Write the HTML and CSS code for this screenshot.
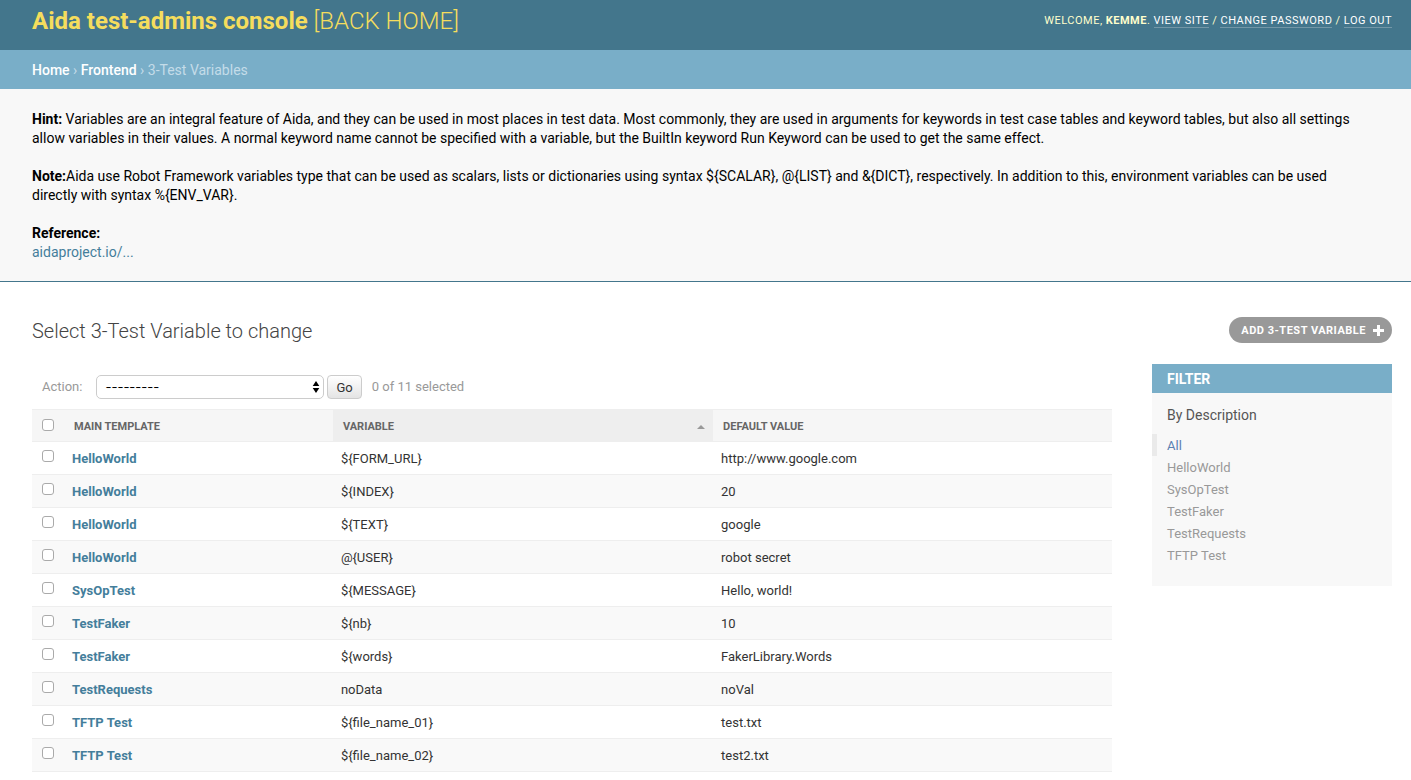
FILE: index.html
```html
<!DOCTYPE html>
<html lang="en">
<head>
<meta charset="utf-8">
<title>Select 3-Test Variable to change</title>
<link rel="stylesheet" href="styles.css">
</head>
<body>
<header class="header">
  <h1 class="brand"><strong>Aida test-admins console</strong> <a href="#">[BACK HOME]</a></h1>
  <div class="user-tools">Welcome, <strong>Kemme</strong>. <a href="#">View site</a> / <a href="#">Change password</a> / <a href="#">Log out</a></div>
</header>
<nav class="breadcrumbs"><a href="#">Home</a> › <a href="#">Frontend</a> › 3-Test Variables</nav>
<section class="hint">
  <p><strong>Hint:</strong> Variables are an integral feature of Aida, and they can be used in most places in test data. Most commonly, they are used in arguments for keywords in test case tables and keyword tables, but also all settings allow variables in their values. A normal keyword name cannot be specified with a variable, but the BuiltIn keyword Run Keyword can be used to get the same effect.</p>
  <p><strong>Note:</strong>Aida use Robot Framework variables type that can be used as scalars, lists or dictionaries using syntax ${SCALAR}, @{LIST} and &amp;{DICT}, respectively. In addition to this, environment variables can be used directly with syntax %{ENV_VAR}.</p>
  <p><strong>Reference:</strong><br><a href="#">aidaproject.io/...</a></p>
</section>
<main class="content">
  <div class="title-row">
    <h2>Select 3-Test Variable to change</h2>
    <a class="add" href="#">Add 3-Test Variable
      <svg width="11" height="13" viewBox="0 0 11 13" aria-hidden="true"><path d="M4 0h3v4h4v3h-4v4h-3v-4h-4v-3h4z" fill="#fff"/></svg>
    </a>
  </div>
  <div class="columns">
    <form class="changelist">
      <div class="actions">
        <label for="action">Action:</label>
        <span class="select-box">
          <select id="action"><option>---------</option></select>
          <svg class="arrows" width="8" height="12" viewBox="0 0 8 12" aria-hidden="true"><path d="M4 0l3.300 5H.7zM4 12L.7 7h6.600z" fill="#000"/></svg>
        </span>
        <button type="button">Go</button>
        <span class="counter">0 of 11 selected</span>
      </div>
      <table>
        <colgroup><col class="col-check"><col class="col-template"><col class="col-variable"><col></colgroup>
        <thead>
          <tr>
            <th><input type="checkbox" aria-label="Select all"></th>
            <th scope="col">Main Template</th>
            <th scope="col" class="sorted"><div class="sort">Variable <svg width="8" height="4" viewBox="0 0 8 4" aria-hidden="true"><path d="M4 0l4 4H0z" fill="#999"/></svg></div></th>
            <th scope="col">Default Value</th>
          </tr>
        </thead>
        <tbody>
          <tr><td><input type="checkbox" aria-label="Select ${FORM_URL}"></td><td><a href="#">HelloWorld</a></td><td>${FORM_URL}</td><td>http://www.google.com</td></tr>
          <tr><td><input type="checkbox" aria-label="Select ${INDEX}"></td><td><a href="#">HelloWorld</a></td><td>${INDEX}</td><td>20</td></tr>
          <tr><td><input type="checkbox" aria-label="Select ${TEXT}"></td><td><a href="#">HelloWorld</a></td><td>${TEXT}</td><td>google</td></tr>
          <tr><td><input type="checkbox" aria-label="Select @{USER}"></td><td><a href="#">HelloWorld</a></td><td>@{USER}</td><td>robot secret</td></tr>
          <tr><td><input type="checkbox" aria-label="Select ${MESSAGE}"></td><td><a href="#">SysOpTest</a></td><td>${MESSAGE}</td><td>Hello, world!</td></tr>
          <tr><td><input type="checkbox" aria-label="Select ${nb}"></td><td><a href="#">TestFaker</a></td><td>${nb}</td><td>10</td></tr>
          <tr><td><input type="checkbox" aria-label="Select ${words}"></td><td><a href="#">TestFaker</a></td><td>${words}</td><td>FakerLibrary.Words</td></tr>
          <tr><td><input type="checkbox" aria-label="Select noData"></td><td><a href="#">TestRequests</a></td><td>noData</td><td>noVal</td></tr>
          <tr><td><input type="checkbox" aria-label="Select ${file_name_01}"></td><td><a href="#">TFTP Test</a></td><td>${file_name_01}</td><td>test.txt</td></tr>
          <tr><td><input type="checkbox" aria-label="Select ${file_name_02}"></td><td><a href="#">TFTP Test</a></td><td>${file_name_02}</td><td>test2.txt</td></tr>
        </tbody>
      </table>
    </form>
    <aside class="filter">
      <h2>Filter</h2>
      <h3>By Description</h3>
      <ul>
        <li class="selected"><a href="#">All</a></li>
        <li><a href="#">HelloWorld</a></li>
        <li><a href="#">SysOpTest</a></li>
        <li><a href="#">TestFaker</a></li>
        <li><a href="#">TestRequests</a></li>
        <li><a href="#">TFTP Test</a></li>
      </ul>
    </aside>
  </div>
</main>
</body>
</html>
```
FILE: styles.css
```css
* { box-sizing: border-box; }
body {
  margin: 0;
  background: #fff;
  color: #333;
  font: 14px/19px Roboto, "Liberation Sans", sans-serif;
}
a { color: #447e9b; text-decoration: none; }
h1, h2, h3, p, ul { margin: 0; padding: 0; }

.header {
  display: flex;
  justify-content: space-between;
  align-items: flex-start;
  padding: 9px 19px 17px 32px;
  background: #43768c;
  color: #ffc;
}
.brand { font-size: 24px; line-height: 24px; font-weight: 300; color: #f5dd5d; }
.brand strong { font-weight: 700; }
.brand a { color: inherit; }
.user-tools {
  padding-top: 4px;
  font-size: 11px;
  line-height: 16px;
  letter-spacing: 0.5px;
  text-transform: uppercase;
}
.user-tools a { color: #fff; border-bottom: 1px solid #7397a7; }

.breadcrumbs {
  padding: 11px 19px 9px 32px;
  background: #79aec8;
  color: #c4dce8;
}
.breadcrumbs a { color: #fff; font-weight: 500; }

.hint {
  display: grid;
  gap: 19px;
  padding: 21px 40px 19px 32px;
  background: #f8f8f8;
  border-bottom: 1px solid #43768c;
  color: #000;
}

.content { padding: 35px 19px 8px 32px; }
.title-row {
  display: flex;
  justify-content: space-between;
  align-items: center;
  padding-bottom: 21px;
}
.title-row h2 { font-size: 20px; line-height: 24px; padding-top: 2px; font-weight: 300; color: #444; }
.add {
  display: flex;
  align-items: center;
  gap: 7px;
  padding: 6px 8px 4px 12px;
  border-radius: 15px;
  background: #999;
  color: #fff;
  font-size: 11px;
  line-height: 16px;
  font-weight: 700;
  letter-spacing: 0.5px;
  text-transform: uppercase;
}

.columns { display: flex; align-items: flex-start; gap: 40px; }
.changelist { flex: 1; min-width: 0; }
.actions {
  display: flex;
  align-items: center;
  padding: 11px 10px 10px;
  color: #999;
  font-size: 13px;
  line-height: 24px;
}
.select-box { position: relative; display: flex; margin: 0 3px 0 14px; }
.select-box select {
  width: 228px;
  height: 24px;
  padding: 0 8px;
  border: 1px solid #ccc;
  border-radius: 5px;
  background: #fff;
  color: #000;
  font: 13px Inter, "Liberation Sans", sans-serif;
  appearance: none;
}
.arrows { position: absolute; right: 4px; top: 6px; }
.actions button {
  height: 24px;
  padding: 0 8px;
  border: 1px solid #ccc;
  border-radius: 4px;
  background: linear-gradient(#fff, #e4e4e4);
  color: #333;
  font: 13px Roboto, "Liberation Sans", sans-serif;
}
.counter { margin-left: 10px; }

table { width: 100%; table-layout: fixed; border-collapse: separate; border-spacing: 0; }
.col-check { width: 32px; }
.col-template { width: 24.9%; }
.col-variable { width: 35.2%; }
th {
  padding: 9px 10px 6px;
  border-top: 1px solid #eee;
  border-bottom: 1px solid #eee;
  background: #f6f6f6;
  color: #666;
  font-size: 11px;
  line-height: 16px;
  font-weight: 700;
  text-align: left;
  text-transform: uppercase;
  vertical-align: top;
}
th.sorted { background: #eee; padding-right: 8px; }
.sort { display: flex; justify-content: space-between; align-items: center; }
td {
  padding: 9px 8px 7px;
  border-bottom: 1px solid #eee;
  font-size: 13px;
  line-height: 16px;
  vertical-align: top;
}
td:first-child { padding: 8px 10px; }
tbody tr:nth-child(even) { background: #f9f9f9; }
td a { font-weight: 700; }
input[type="checkbox"] {
  display: block;
  width: 12px;
  height: 12px;
  margin: 0;
  border: 1px solid #aaa;
  border-radius: 3px;
  background: #fff;
  appearance: none;
}

.filter { width: 240px; padding-bottom: 20px; background: #f8f8f8; }
.filter h2 {
  padding: 6px 15px 4px;
  background: #79aec8;
  color: #fff;
  font-size: 14px;
  line-height: 19px;
  font-weight: 700;
  text-transform: uppercase;
}
.filter h3 { padding: 13px 15px 9px; font-size: 14px; font-weight: 400; color: #555; }
.filter ul { list-style: none; }
.filter li {
  padding: 1px 0 0 10px;
  border-left: 5px solid transparent;
  font-size: 13px;
  line-height: 21px;
}
.filter li a { color: #999; }
.filter .selected { border-left-color: #eaeaea; }
.filter .selected a { color: #5b80b2; }
```
